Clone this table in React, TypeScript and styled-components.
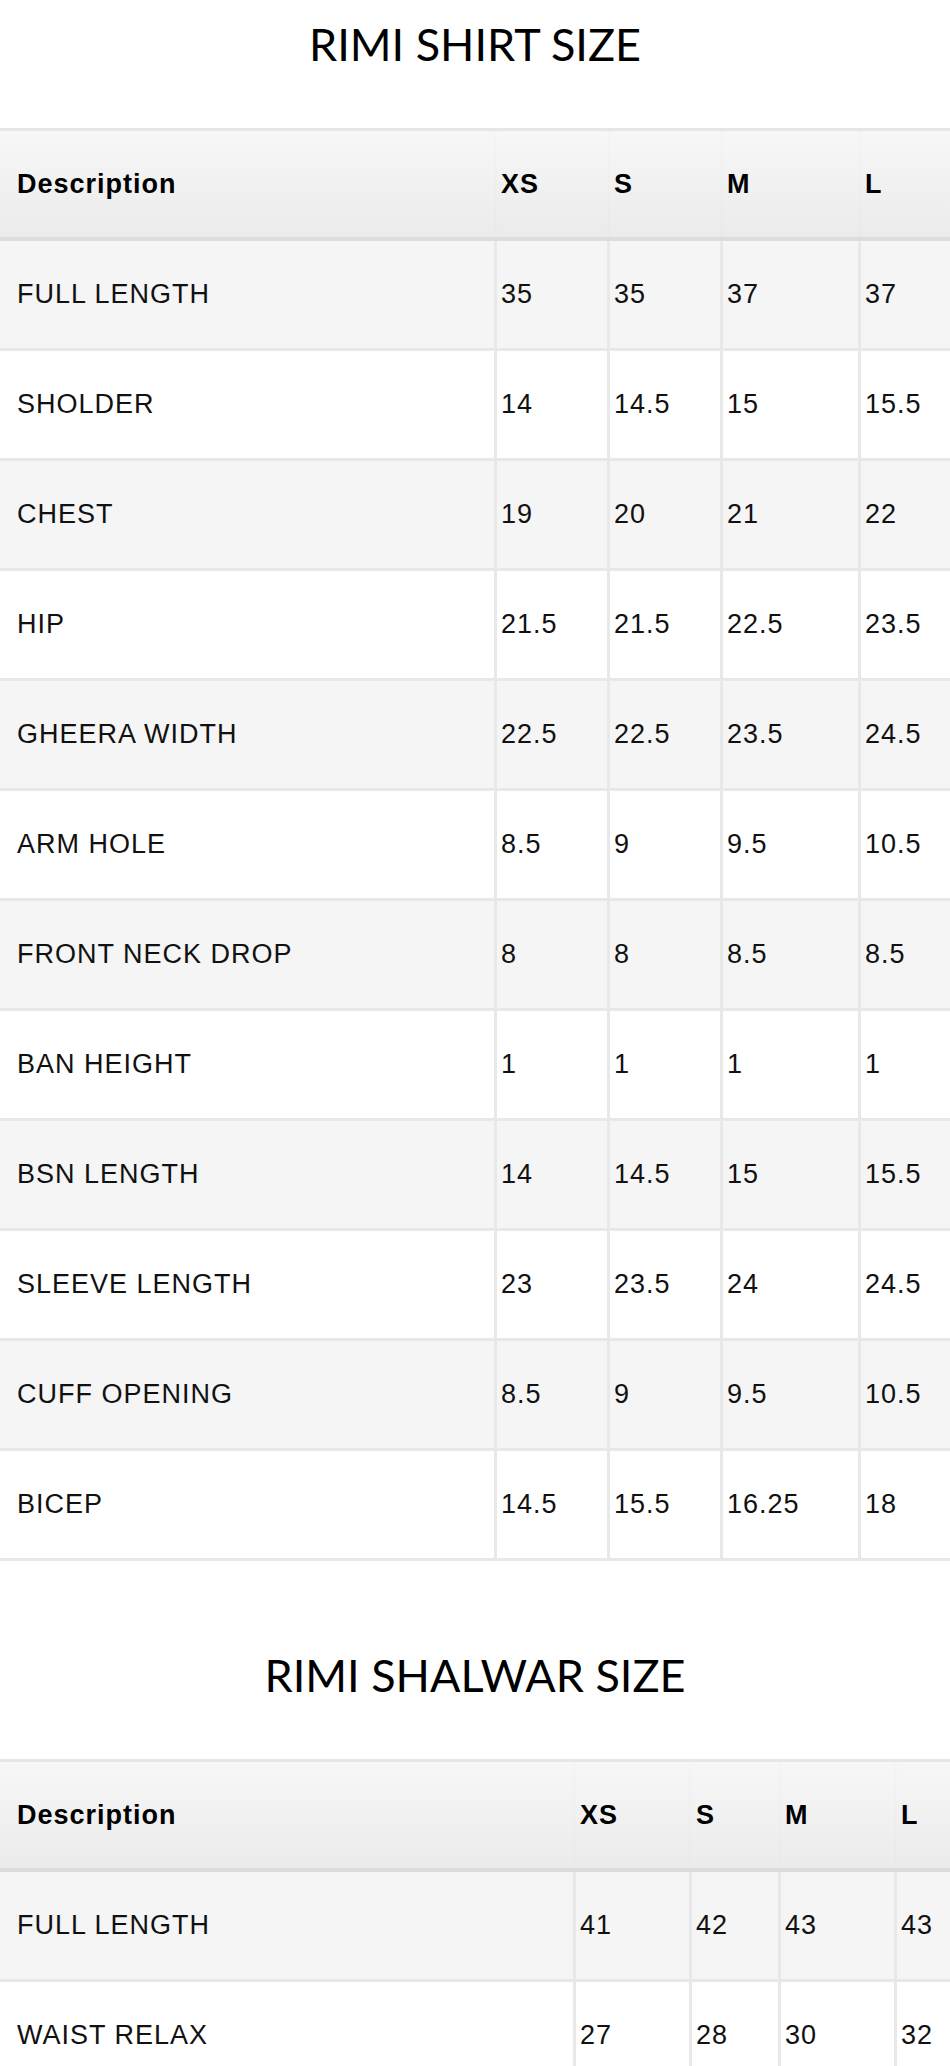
import React from 'react';
import styled, { createGlobalStyle } from 'styled-components';

const GlobalStyle = createGlobalStyle`
  html,
  body {
    margin: 0;
    padding: 0;
    background: #ffffff;
  }

  body {
    font-family: 'Liberation Sans', Arial, sans-serif;
    color: #111111;
  }
`;

type SizeRow = [string, string, string, string, string];

const shirtRows: SizeRow[] = [
  ['FULL LENGTH', '35', '35', '37', '37'],
  ['SHOLDER', '14', '14.5', '15', '15.5'],
  ['CHEST', '19', '20', '21', '22'],
  ['HIP', '21.5', '21.5', '22.5', '23.5'],
  ['GHEERA WIDTH', '22.5', '22.5', '23.5', '24.5'],
  ['ARM HOLE', '8.5', '9', '9.5', '10.5'],
  ['FRONT NECK DROP', '8', '8', '8.5', '8.5'],
  ['BAN HEIGHT', '1', '1', '1', '1'],
  ['BSN LENGTH', '14', '14.5', '15', '15.5'],
  ['SLEEVE LENGTH', '23', '23.5', '24', '24.5'],
  ['CUFF OPENING', '8.5', '9', '9.5', '10.5'],
  ['BICEP', '14.5', '15.5', '16.25', '18'],
];

const shalwarRows: SizeRow[] = [
  ['FULL LENGTH', '41', '42', '43', '43'],
  ['WAIST RELAX', '27', '28', '30', '32'],
];

const Page = styled.main`
  width: 950px;
`;

const Section = styled.section`
  & + & {
    padding-top: 70px;
  }
`;

const Title = styled.h2`
  margin: 22px 0 61px;
  font-family: Lato, 'Open Sans', sans-serif;
  font-size: 45px;
  font-weight: 400;
  line-height: 45px;
  text-align: center;
  color: #000000;
`;

const HeadRow = styled.div<{ $columns: string }>`
  display: grid;
  grid-template-columns: ${(p) => p.$columns};
  box-sizing: border-box;
  height: 113px;
  border-top: 3px solid #e6e6e6;
  border-bottom: 4px solid #dcdcdc;
  background: linear-gradient(#f7f7f7, #ebebeb);
`;

const BodyRow = styled.div<{ $columns: string; $shaded: boolean }>`
  display: grid;
  grid-template-columns: ${(p) => p.$columns};
  box-sizing: border-box;
  height: 110px;
  border-bottom: 3px solid #e8e8e8;
  background: ${(p) => (p.$shaded ? '#f5f5f5' : '#ffffff')};
`;

const Cell = styled.div<{ $lead?: boolean; $head?: boolean }>`
  display: flex;
  align-items: center;
  box-sizing: border-box;
  padding-left: ${(p) => (p.$lead ? '17px' : '4px')};
  border-left: ${(p) =>
    p.$lead ? 'none' : p.$head ? '3px solid rgba(0, 0, 0, 0.008)' : '3px solid #e8e8e8'};
  font-size: 27px;
  font-weight: ${(p) => (p.$head ? 700 : 400)};
  letter-spacing: 1px;
  color: ${(p) => (p.$head ? '#000000' : '#111111')};
  white-space: nowrap;
`;

interface SizeTableProps {
  title: string;
  columns: string;
  rows: SizeRow[];
}

const SizeTable: React.FC<SizeTableProps> = ({ title, columns, rows }) => {
  return (
    <Section>
      <Title>{title}</Title>
      <div role="table">
        <HeadRow $columns={columns} role="row">
          <Cell $lead $head>Description</Cell>
          <Cell $head>XS</Cell>
          <Cell $head>S</Cell>
          <Cell $head>M</Cell>
          <Cell $head>L</Cell>
        </HeadRow>
        {rows.map((row, i) => (
          <BodyRow key={row[0]} $columns={columns} $shaded={i % 2 === 0} role="row">
            {row.map((value, j) => (
              <Cell key={j} $lead={j === 0}>
                {value}
              </Cell>
            ))}
          </BodyRow>
        ))}
      </div>
    </Section>
  );
};

export default function App() {
  return (
    <>
      <GlobalStyle />
      <Page>
        <SizeTable
          title="RIMI SHIRT SIZE"
          columns="494px 113px 113px 138px 92px"
          rows={shirtRows}
        />
        <SizeTable
          title="RIMI SHALWAR SIZE"
          columns="573px 116px 89px 116px 56px"
          rows={shalwarRows}
        />
      </Page>
    </>
  );
}
